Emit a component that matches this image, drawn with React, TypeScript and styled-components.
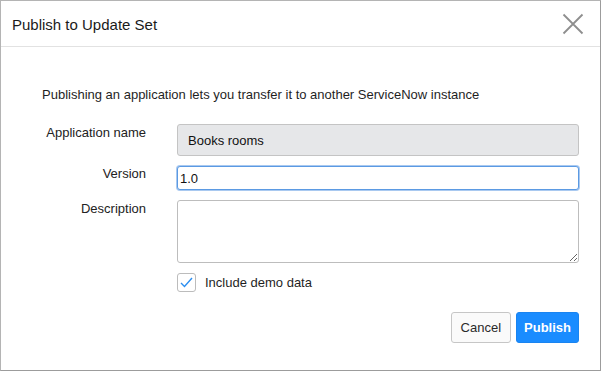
import React, { useState } from "react";
import styled, { createGlobalStyle } from "styled-components";

const GlobalStyle = createGlobalStyle`
    html, body {
        margin: 0;
        padding: 0;
        background: #ffffff;
    }
    body {
        font-family: "Liberation Sans", Arial, sans-serif;
        color: #1f1f1f;
    }
`;

const Dialog = styled.div`
    width: 599px;
    height: 369px;
    border: 1px solid #9c9c9c;
    border-left-color: #b4b4b4;
    border-top-color: #b4b4b4;
    background: #ffffff;
    display: flex;
    flex-direction: column;
`;

const Header = styled.div`
    height: 45px;
    display: flex;
    align-items: center;
    justify-content: space-between;
    padding: 0 16px 0 11px;
    border-bottom: 1px solid #e2e2e2;
`;

const Title = styled.h1`
    margin: 0;
    font-size: 15px;
    font-weight: 400;
    color: #1a1a1a;
    padding-top: 1px;
`;

const CloseButton = styled.button`
    border: none;
    background: none;
    padding: 0;
    width: 22px;
    height: 22px;
    display: flex;
    align-items: center;
    justify-content: center;
    cursor: pointer;
`;

const Body = styled.div`
    padding: 40px 21px 0 41px;
    display: flex;
    flex-direction: column;
`;

const Intro = styled.p`
    margin: 0 0 21px;
    font-size: 13px;
    line-height: 16px;
`;

const Form = styled.div`
    display: grid;
    grid-template-columns: 104px 1fr;
    column-gap: 31px;
    row-gap: 10px;
`;

const Label = styled.label<{ $top: number }>`
    text-align: right;
    font-size: 13px;
    line-height: 16px;
    padding-top: ${(p) => p.$top}px;
    color: #222;
`;

const Field = styled.input<{ $readOnly?: boolean }>`
    box-sizing: border-box;
    width: 100%;
    font-family: "Liberation Sans", Arial, sans-serif;
    font-size: 13px;
    color: #111;
    border-radius: 3px;
    outline: none;
    ${(p) =>
        p.$readOnly
            ? `
        height: 32px;
        padding: 0 10px;
        background: #e6e7e9;
        border: 1px solid #c4c4c4;
    `
            : `
        height: 24px;
        padding: 0 2px;
        background: #ffffff;
        border: 1px solid #5b9ae3;
        box-shadow: 0 0 0 1px #a9c9f0;
    `}
`;

const TextArea = styled.textarea`
    box-sizing: border-box;
    width: 100%;
    height: 63px;
    border: 1px solid #bdbdbd;
    border-radius: 3px;
    font-family: "Liberation Sans", Arial, sans-serif;
    font-size: 13px;
    padding: 4px 6px;
    resize: vertical;
    outline: none;
    display: block;
`;

const CheckRow = styled.label`
    grid-column: 2;
    display: flex;
    align-items: center;
    gap: 9px;
    font-size: 13px;
    cursor: pointer;
`;

const CheckBox = styled.span`
    box-sizing: border-box;
    width: 19px;
    height: 19px;
    border: 1px solid #bcbcbc;
    border-radius: 3px;
    display: flex;
    align-items: center;
    justify-content: center;
    background: #fff;
`;

const Footer = styled.div`
    display: flex;
    justify-content: flex-end;
    gap: 5px;
    padding: 20px 0 0 0;
`;

const Button = styled.button<{ $primary?: boolean }>`
    height: 31px;
    box-sizing: border-box;
    border-radius: 3px;
    font-family: "Liberation Sans", Arial, sans-serif;
    font-size: 13px;
    padding: 0 ${(p) => (p.$primary ? 7 : 9)}px;
    cursor: pointer;
    border: 1px solid ${(p) => (p.$primary ? "#1a84f0" : "#c6c6c6")};
    background: ${(p) => (p.$primary ? "#1a8cff" : "#fafafa")};
    color: ${(p) => (p.$primary ? "#ffffff" : "#2a2a2a")};
    font-weight: ${(p) => (p.$primary ? 700 : 400)};
`;

const App: React.FC = () => {
    const [version, setVersion] = useState("1.0");
    const [demo, setDemo] = useState(true);
    return (
        <>
            <GlobalStyle />
            <Dialog>
                <Header>
                    <Title>Publish to Update Set</Title>
                    <CloseButton aria-label="Close">
                        <svg width="22" height="22" viewBox="0 0 22 22">
                            <path
                                d="M1.5 1.5 L20.5 20.5 M20.5 1.5 L1.5 20.5"
                                stroke="#8e8e8e"
                                strokeWidth="1.8"
                                fill="none"
                            />
                        </svg>
                    </CloseButton>
                </Header>
                <Body>
                    <Intro>
                        Publishing an application lets you transfer it to another ServiceNow
                        instance
                    </Intro>
                    <Form>
                        <Label $top={1}>Application name</Label>
                        <Field $readOnly readOnly value="Books rooms" />
                        <Label $top={0}>Version</Label>
                        <Field value={version} onChange={(e) => setVersion(e.target.value)} />
                        <Label $top={1}>Description</Label>
                        <TextArea />
                        <CheckRow onClick={() => setDemo(!demo)}>
                            <CheckBox>
                                {demo && (
                                    <svg width="13" height="11" viewBox="0 0 13 11">
                                        <path
                                            d="M1 6 L4.5 9.5 L12 1"
                                            stroke="#2b8ef0"
                                            strokeWidth="1.4"
                                            fill="none"
                                        />
                                    </svg>
                                )}
                            </CheckBox>
                            Include demo data
                        </CheckRow>
                    </Form>
                    <Footer>
                        <Button>Cancel</Button>
                        <Button $primary>Publish</Button>
                    </Footer>
                </Body>
            </Dialog>
        </>
    );
};

export default App;
